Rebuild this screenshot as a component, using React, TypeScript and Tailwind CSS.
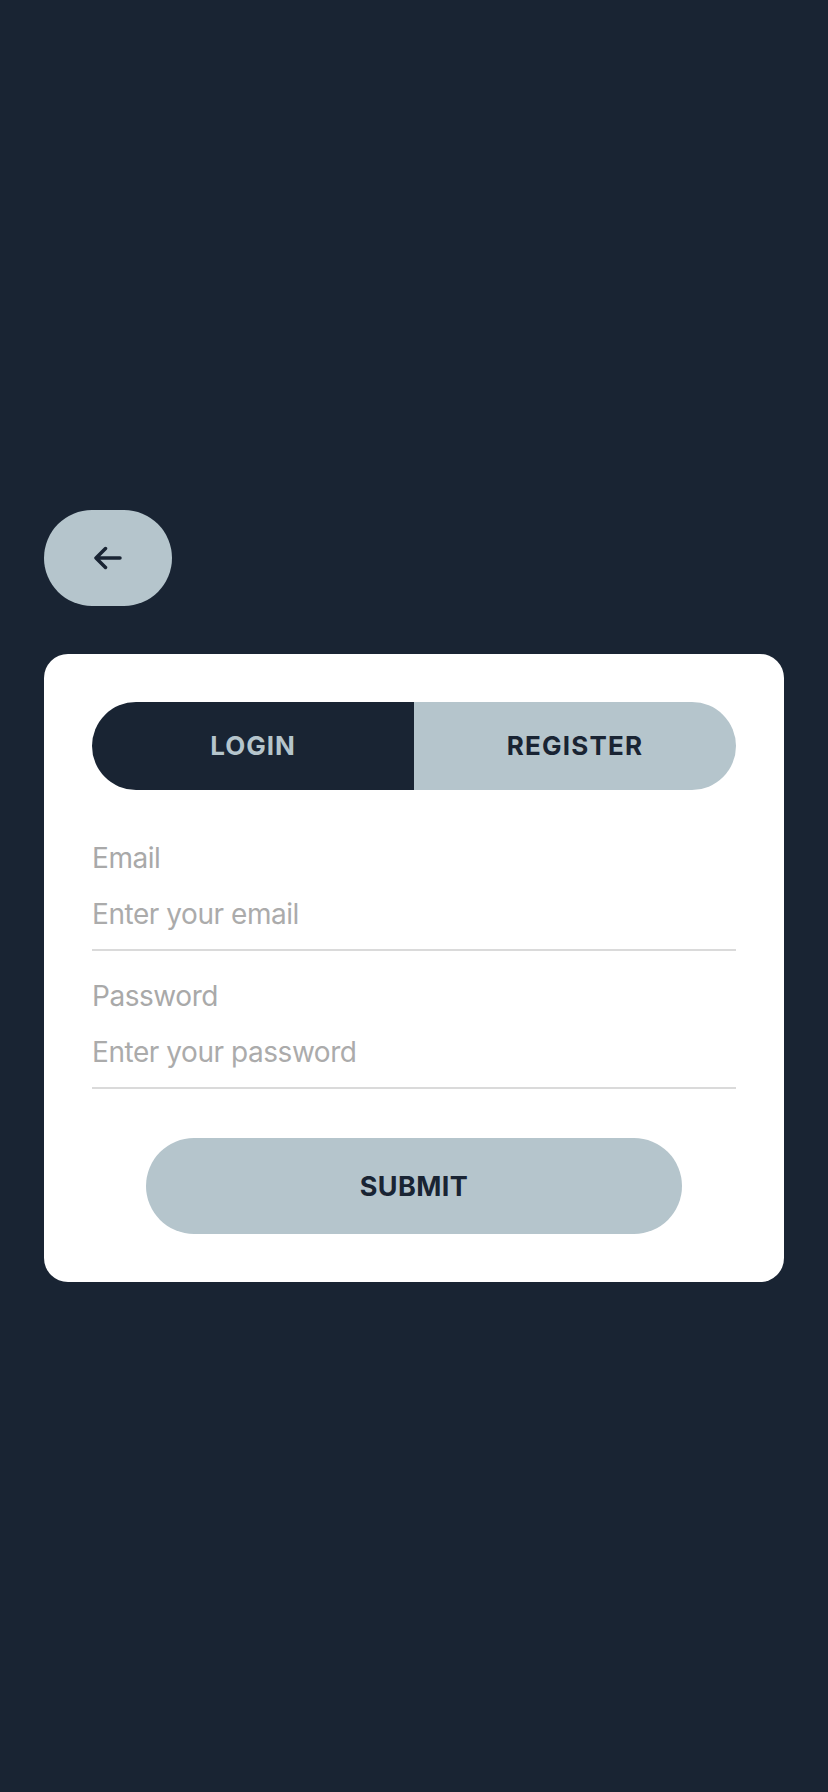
import React from "react";

export default function App() {
  return (
    <div
      className="min-h-screen w-full bg-[#192433] flex flex-col justify-center px-[44px]"
      style={{ fontFamily: "Inter, 'Noto Sans', sans-serif" }}
    >
      <button className="w-[128px] h-[96px] rounded-full bg-[#b5c5cc] flex items-center justify-center">
        <svg width="28" height="24" viewBox="0 0 28 24" fill="none">
          <path
            d="M11.5 2.5 L2 12 L11.5 21.5 M2.5 12 H26"
            stroke="#192433"
            strokeWidth="3.5"
            strokeLinecap="round"
            strokeLinejoin="round"
          />
        </svg>
      </button>

      <div className="mt-[48px] bg-white rounded-[24px] p-[48px] flex flex-col">
        <div className="flex h-[88px]">
          <div className="flex-1 bg-[#192433] rounded-l-full flex items-center justify-center">
            <span className="text-[26px] font-bold tracking-[1px] text-[#b5c5cc] leading-none">LOGIN</span>
          </div>
          <div className="flex-1 bg-[#b5c5cc] rounded-r-full flex items-center justify-center">
            <span className="text-[26px] font-bold tracking-[1.2px] text-[#192433] leading-none">REGISTER</span>
          </div>
        </div>

        <div className="mt-[51px] flex flex-col">
          <label className="text-[28px] leading-[34px] tracking-[-0.45px] text-[#a9a9a9]">Email</label>
          <div className="mt-[22px] pb-[18px] border-b-2 border-[#dadada]">
            <span className="block text-[28px] leading-[34px] tracking-[-0.45px] text-[#ababab]">Enter your email</span>
          </div>
        </div>

        <div className="mt-[28px] flex flex-col">
          <label className="text-[28px] leading-[34px] tracking-[-0.45px] text-[#a9a9a9]">Password</label>
          <div className="mt-[22px] pb-[18px] border-b-2 border-[#dadada]">
            <span className="block text-[28px] leading-[34px] tracking-[-0.45px] text-[#ababab]">Enter your password</span>
          </div>
        </div>

        <button className="mt-[49px] mx-[54px] h-[96px] rounded-full bg-[#b5c5cc] flex items-center justify-center">
          <span className="text-[27px] font-bold tracking-[0.4px] text-[#192433] leading-none">SUBMIT</span>
        </button>
      </div>
    </div>
  );
}
